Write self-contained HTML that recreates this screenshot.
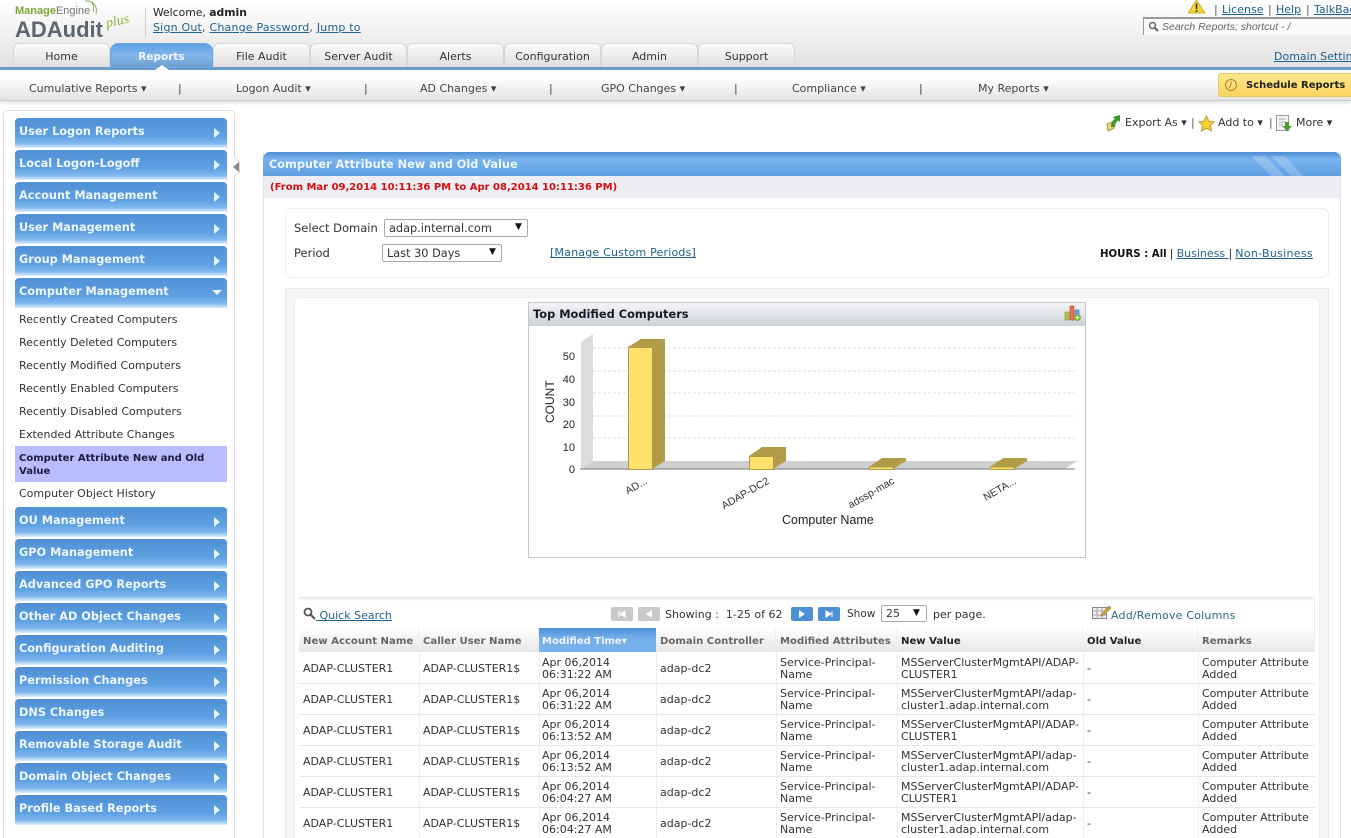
<!DOCTYPE html>
<html style="overflow:hidden"><head><meta charset="utf-8"><style>
html,body{margin:0;padding:0;background:#fff}
body{width:1351px;height:838px;font-family:"DejaVu Sans","Liberation Sans",sans-serif;font-size:11px;color:#333}
#w{position:relative;width:1351px;height:838px;overflow:hidden}
.a,.t,.s,.h,.i,.c,.th{position:absolute;white-space:nowrap}
a{color:#1f6290;text-decoration:underline}
.t{top:43px;height:24px;width:97px;box-sizing:border-box;border:1px solid #d8d8d8;border-bottom:0;border-radius:6px 6px 0 0;background:linear-gradient(#fafafa,#dfdfdf);text-align:center;line-height:26px;color:#333;font-size:11px}
.s{top:82px;line-height:13px;color:#444;font-size:11px}
.h{left:15px;width:212px;height:30px;border-radius:4px 4px 0 0;background:linear-gradient(#4f90d6 0,#5fa0e2 60%,#80b8ee 85%,#dfeefa 100%);color:#eef6fd;font-weight:bold;font-size:11.3px;line-height:28px;text-indent:4px}
.h:after{content:"";position:absolute;left:199px;top:10px;border-left:6px solid #e6f1fb;border-top:5px solid transparent;border-bottom:5px solid transparent}
.h.o:after{left:197px;top:12px;border-top:5px solid #e6f1fb;border-left:5px solid transparent;border-right:5px solid transparent;border-bottom:0}
.i{left:19px;line-height:13px;color:#333;font-size:11px}
.th{top:628px;height:24px;line-height:28px;font-weight:bold;color:#666;background:linear-gradient(#fff,#e6e6e6);border-right:1px solid #eee;box-sizing:border-box;padding-left:4px;font-size:10.1px}
.c{line-height:12px;color:#333;font-size:11px}
.r{position:absolute;left:299px;width:1016px;height:1px;background:#e8e8e8}
.v{position:absolute;top:652px;height:186px;width:1px;background:#eee}
.b{position:absolute;top:607px;width:22px;height:14px;border-radius:2px}
</style></head><body><div id="w">

<!-- header -->
<div class="a" style="left:0;top:0;width:1351px;height:67px;background:linear-gradient(#fff,#e2e2e2)"></div>
<div class="a" style="left:15px;top:3px;font:bold 11px 'Liberation Sans',sans-serif;color:#7ba63c;line-height:16px">Manage<span style="font-weight:normal;color:#777">Engine</span></div>
<svg class="a" style="left:82px;top:0" width="20" height="16"><path d="M3 1C9 0 16 4 14 14M6 1C10 1 13 5 11 12" fill="none" stroke="#8fae5d" stroke-width="1"/></svg>
<div class="a" style="left:15px;top:17px;font:bold 22px 'Liberation Sans',sans-serif;color:#5d6670;line-height:25px">ADAudit</div>
<div class="a" style="left:106px;top:14px;font:italic 14px 'Liberation Serif',serif;color:#8cb63f;line-height:16px;transform:rotate(-12deg)">plus</div>
<div class="a" style="left:145px;top:8px;width:1px;height:28px;background:#ccc"></div>
<div class="a" style="left:153px;top:6px;line-height:13px;color:#222;font-size:10.8px">Welcome, <b>admin</b></div>
<div class="a" style="left:153px;top:21px;line-height:13px;font-size:11px;letter-spacing:.2px;color:#555"><a>Sign Out</a>, <a>Change Password</a>, <a>Jump to</a></div>

<svg class="a" style="left:1188px;top:0" width="18" height="14"><path d="M8.5 0L17 13H0Z" fill="#f2d32f" stroke="#b8a020" stroke-width=".7"/><path d="M8.5 3.5V9M8.5 10V12" stroke="#333" stroke-width="1.6"/></svg>
<div class="a" style="left:1214px;top:3px;line-height:13px;font-size:11px;color:#555">|</div>
<div class="a" style="left:1222px;top:3px;line-height:13px;font-size:11px"><a>License</a></div>
<div class="a" style="left:1268px;top:3px;line-height:13px;font-size:11px;color:#555">|</div>
<div class="a" style="left:1276px;top:3px;line-height:13px;font-size:11px"><a>Help</a></div>
<div class="a" style="left:1306px;top:3px;line-height:13px;font-size:11px;color:#555">|</div>
<div class="a" style="left:1314px;top:3px;line-height:13px;font-size:11px"><a>TalkBack</a></div>
<div class="a" style="left:1143px;top:17px;width:208px;height:18px;box-sizing:border-box;border-left:1px solid #999;border-top:2px solid #999;background:#fafafa"></div>
<svg class="a" style="left:1148px;top:21px" width="11" height="11"><circle cx="4.5" cy="4.5" r="3" fill="none" stroke="#666" stroke-width="1.5"/><path d="M6.8 6.8L10 10" stroke="#666" stroke-width="2"/></svg>
<div class="a" style="left:1162px;top:21px;font:italic 10.5px 'Liberation Sans',sans-serif;color:#666;line-height:13px">Search Reports; shortcut - /</div>
<div class="a" style="left:1274px;top:50px;line-height:13px;font-size:11px"><a>Domain Settings</a></div>

<!-- tabs -->
<div class="t" style="left:13px">Home</div>
<div class="a" style="left:110px;top:43px;width:103px;height:25px;border-radius:8px 8px 0 0;background:linear-gradient(#5fa0e2,#82b6ea 50%,#6f9fcf);text-align:center;line-height:27px;color:#eef6ff;font-weight:bold;font-size:10.5px;border:1px solid #6fa8e0;box-sizing:border-box;z-index:2">Reports</div>
<div class="t" style="left:213px">File Audit</div>
<div class="t" style="left:310px">Server Audit</div>
<div class="t" style="left:407px">Alerts</div>
<div class="t" style="left:504px">Configuration</div>
<div class="t" style="left:601px">Admin</div>
<div class="t" style="left:698px">Support</div>
<div class="a" style="left:0;top:67px;width:1351px;height:3px;background:#6a9ac8;z-index:1"></div>
<div class="a" style="left:155px;top:65px;border-bottom:5px solid #fff;border-left:7px solid transparent;border-right:7px solid transparent;z-index:3"></div>

<!-- subnav -->
<div class="a" style="left:0;top:70px;width:1351px;height:30px;background:linear-gradient(#fff 25%,#e4e4e4);border-bottom:1px solid #ccc;box-shadow:0 2px 3px #e4e4e4"></div>
<div class="s" style="left:29px">Cumulative Reports ▾</div><div class="s" style="left:178px">|</div>
<div class="s" style="left:236px">Logon Audit ▾</div><div class="s" style="left:364px">|</div>
<div class="s" style="left:420px">AD Changes ▾</div><div class="s" style="left:549px">|</div>
<div class="s" style="left:601px">GPO Changes ▾</div><div class="s" style="left:734px">|</div>
<div class="s" style="left:792px">Compliance ▾</div><div class="s" style="left:919px">|</div>
<div class="s" style="left:978px">My Reports ▾</div>
<div class="a" style="left:1218px;top:73px;width:133px;height:24px;box-sizing:border-box;border:1px solid #e8c860;border-right:0;border-radius:3px 0 0 3px;background:linear-gradient(#fde88e,#fbd45e)"></div>
<svg class="a" style="left:1224px;top:78px" width="14" height="14"><circle cx="7" cy="7" r="5.5" fill="none" stroke="#a58a2c"/><path d="M7 3.5V7L5 10" fill="none" stroke="#a58a2c"/></svg>
<div class="a" style="left:1246px;top:79px;line-height:13px;font-weight:bold;color:#222;font-size:10px">Schedule Reports</div>

<!-- sidebar -->
<div class="a" style="left:3px;top:110px;width:232px;height:740px;box-sizing:border-box;border:1px solid #ddd;border-radius:5px;background:#fff"></div>
<div class="a" style="left:230px;top:152px;width:9px;height:30px;background:#fff;z-index:2"></div>
<svg class="a" style="left:229px;top:150px;z-index:3" width="12" height="34"><path d="M5.5 0V8L10.5 12V22L5.5 26V34" fill="none" stroke="#ddd"/><path d="M10 12V22L4 17Z" fill="#888"/></svg>
<div class="h" style="top:118px">User Logon Reports</div>
<div class="h" style="top:150px">Local Logon-Logoff</div>
<div class="h" style="top:182px">Account Management</div>
<div class="h" style="top:214px">User Management</div>
<div class="h" style="top:246px">Group Management</div>
<div class="h o" style="top:278px">Computer Management</div>
<div class="i" style="top:313px">Recently Created Computers</div>
<div class="i" style="top:336px">Recently Deleted Computers</div>
<div class="i" style="top:359px">Recently Modified Computers</div>
<div class="i" style="top:382px">Recently Enabled Computers</div>
<div class="i" style="top:405px">Recently Disabled Computers</div>
<div class="i" style="top:428px">Extended Attribute Changes</div>
<div class="a" style="left:15px;top:446px;width:212px;height:36px;background:#b9bdfb"></div>
<div class="i" style="top:452px;font-weight:bold;color:#1c1c44;font-size:10px">Computer Attribute New and Old<br>Value</div>
<div class="i" style="top:487px">Computer Object History</div>
<div class="h" style="top:507px">OU Management</div>
<div class="h" style="top:539px">GPO Management</div>
<div class="h" style="top:571px">Advanced GPO Reports</div>
<div class="h" style="top:603px">Other AD Object Changes</div>
<div class="h" style="top:635px">Configuration Auditing</div>
<div class="h" style="top:667px">Permission Changes</div>
<div class="h" style="top:699px">DNS Changes</div>
<div class="h" style="top:731px">Removable Storage Audit</div>
<div class="h" style="top:763px">Domain Object Changes</div>
<div class="h" style="top:795px">Profile Based Reports</div>

<!-- actions -->
<svg class="a" style="left:1106px;top:114px" width="16" height="18"><path d="M1 10L8 7L8 14L2 17Z" fill="#eed77a" stroke="#b09a40"/><path d="M5 13C5 8 7 6 9 5L7 3L14 1L14 8L12 6.5C10 8 9 10 9 13Z" fill="#3d9a2c"/></svg>
<div class="a" style="left:1125px;top:116px;line-height:13px;color:#333;font-size:11px">Export As ▾</div>
<div class="a" style="left:1191px;top:116px;line-height:13px;color:#555">|</div>
<svg class="a" style="left:1198px;top:115px" width="17" height="17"><path d="M8.5 1L11 6.3L16 7L12.3 10.5L13.5 16L8.5 13.2L3.5 16L4.7 10.5L1 7L6 6.3Z" fill="#f6d234" stroke="#c79a2a"/></svg>
<div class="a" style="left:1218px;top:116px;line-height:13px;color:#333;font-size:11px">Add to ▾</div>
<div class="a" style="left:1269px;top:116px;line-height:13px;color:#555">|</div>
<svg class="a" style="left:1276px;top:115px" width="17" height="17"><rect x=".5" y=".5" width="12" height="15" fill="#f4f4f4" stroke="#999"/><path d="M3 4H10M3 7H9M3 10H7" stroke="#aaa"/><path d="M9 7H13V11H16L11 16L6 11H9Z" fill="#4e9a2e"/></svg>
<div class="a" style="left:1296px;top:116px;line-height:13px;color:#333;font-size:11px">More ▾</div>

<!-- main panel -->
<div class="a" style="left:263px;top:152px;width:1078px;height:686px;box-sizing:border-box;border-left:1px solid #e4e4e4;border-right:1px solid #e4e4e4;background:#fff"></div>
<div class="a" style="left:263px;top:152px;width:1078px;height:24px;border-radius:7px 7px 0 0;background:linear-gradient(#4d8dd2,#79b3ee 30%,#5d9de0);overflow:hidden">
<svg class="a" style="left:980px;top:0" width="70" height="24"><path d="M8 4H22L42 24H28ZM28 4H42L60 24H48Z" fill="#fff" opacity=".22"/></svg></div>
<div class="a" style="left:269px;top:158px;line-height:14px;color:#eef6fd;font-weight:bold;font-size:11.3px">Computer Attribute New and Old Value</div>
<div class="a" style="left:264px;top:176px;width:1076px;height:22px;background:#eceef4"></div>
<div class="a" style="left:270px;top:181px;line-height:13px;color:#d40f0f;font-weight:bold;font-size:10px">(From Mar 09,2014 10:11:36 PM to Apr 08,2014 10:11:36 PM)</div>

<!-- filter -->
<div class="a" style="left:285px;top:208px;width:1044px;height:70px;box-sizing:border-box;border:1px solid #eee;border-radius:6px"></div>
<div class="a" style="left:294px;top:221px;line-height:14px;font-size:11.5px;color:#333">Select Domain</div>
<div class="a" style="left:384px;top:219px;width:144px;height:18px;box-sizing:border-box;border:1px solid #aaa;border-radius:2px;line-height:17px;padding-left:4px;font-size:11.3px;color:#333">adap.internal.com<span style="position:absolute;left:130px;top:-1px;font-size:9px;color:#111">▼</span></div>
<div class="a" style="left:294px;top:246px;line-height:14px;font-size:11.5px;color:#333">Period</div>
<div class="a" style="left:382px;top:244px;width:120px;height:18px;box-sizing:border-box;border:1px solid #aaa;border-radius:2px;line-height:17px;padding-left:4px;font-size:11.3px;color:#333">Last 30 Days<span style="position:absolute;left:106px;top:-1px;font-size:9px;color:#111">▼</span></div>
<div class="a" style="left:550px;top:246px;line-height:13px;font-size:11px;letter-spacing:.2px"><a>[Manage Custom Periods]</a></div>
<div class="a" style="left:1100px;top:247px;line-height:13px;font-size:10.2px;color:#111"><b>HOURS : All</b> | <a style="font-size:11px">Business </a> | <a style="font-size:11px;letter-spacing:.3px">Non-Business </a></div>

<!-- chart container -->
<div class="a" style="left:285px;top:288px;width:1044px;height:560px;box-sizing:border-box;border:1px solid #e8e8e8;background:#f6f6f6"></div>
<div class="a" style="left:294px;top:297px;width:1026px;height:550px;box-sizing:border-box;border:1px solid #eee;border-radius:6px;background:#fff"></div>

<!-- chart -->
<div class="a" style="left:528px;top:302px;width:558px;height:256px;box-sizing:border-box;border:1px solid #c4c8cc;background:#fff"></div>
<div class="a" style="left:529px;top:303px;width:556px;height:23px;background:linear-gradient(#f4f5f7,#ccd1d6)"></div>
<div class="a" style="left:533px;top:307px;line-height:14px;font-weight:bold;color:#1a1a2a;font-size:11.4px">Top Modified Computers</div>
<svg class="a" style="left:1064px;top:305px" width="18" height="17"><rect x="1" y="7" width="4" height="8" fill="#b8c24a" stroke="#7b8a30" stroke-width=".6"/><rect x="6" y="1" width="4" height="14" fill="#e8735a" stroke="#a84a30" stroke-width=".6"/><rect x="11" y="5" width="4" height="10" fill="#6ba8d8" stroke="#3b78a8" stroke-width=".6"/><circle cx="13.5" cy="12.5" r="3.5" fill="#7ab92e"/><path d="M11.5 12.5H15.5M13.5 10.5V14.5" stroke="#fff"/></svg>
<svg class="a" style="left:529px;top:326px" width="556" height="231" viewBox="529 326 556 231">
<path d="M581 469V342L593 334V461Z" fill="#dcdcdc"/>
<path d="M581 469L593 461H1077L1065 469Z" fill="#cfcfcf"/>
<g stroke="#ddd" stroke-dasharray="3 2"><path d="M593 348H1075M593 371H1075M593 393H1075M593 416H1075M593 438H1075"/></g>
<path d="M580 469H1075" stroke="#777"/>
<path d="M652 347L665 339V461L652 469Z" fill="#b09c46"/><path d="M628 347L641 339H665L652 347Z" fill="#b09c46"/><rect x="628.5" y="347.5" width="24" height="122" fill="#ffe06a" stroke="#b09c46"/>
<path d="M773 456L786 447V461L773 469Z" fill="#b09c46"/><path d="M749 456L762 447H786L773 456Z" fill="#b09c46"/><rect x="749.5" y="456.5" width="24" height="13" fill="#ffe06a" stroke="#b09c46"/>
<path d="M893 467L906 458V461L893 469Z" fill="#b09c46"/><path d="M869 467L882 458H906L893 467Z" fill="#b09c46"/><rect x="869.5" y="467" width="24" height="2.5" fill="#ffe06a" stroke="#b09c46"/>
<path d="M1014 467L1027 458V461L1014 469Z" fill="#b09c46"/><path d="M990 467L1003 458H1027L1014 467Z" fill="#b09c46"/><rect x="990.5" y="467" width="24" height="2.5" fill="#ffe06a" stroke="#b09c46"/>
<g font-family="Liberation Sans" font-size="11" fill="#222" text-anchor="end">
<text x="575" y="473">0</text><text x="575" y="451">10</text><text x="575" y="428">20</text><text x="575" y="406">30</text><text x="575" y="383">40</text><text x="575" y="360">50</text>
</g>
<text transform="translate(554,423) rotate(-90)" font-family="Liberation Sans" font-size="12" fill="#222">COUNT</text>
<g font-family="Liberation Sans" font-size="10.5" fill="#333" text-anchor="end">
<text transform="translate(648,483) rotate(-30)">AD...</text>
<text transform="translate(770,483) rotate(-30)">ADAP-DC2</text>
<text transform="translate(895,483) rotate(-30)">adssp-mac</text>
<text transform="translate(1017,483) rotate(-30)">NETA...</text>
</g>
<text x="782" y="524" font-family="Liberation Sans" font-size="12.5" fill="#222">Computer Name</text>
</svg>

<!-- table toolbar -->
<div class="a" style="left:299px;top:597px;width:1016px;height:31px;background:linear-gradient(#e4e4e4,#fff 12%);border-right:1px solid #eee;box-sizing:border-box"></div>
<svg class="a" style="left:303px;top:607px" width="13" height="13"><circle cx="5" cy="5" r="3.5" fill="none" stroke="#555" stroke-width="1.8"/><path d="M7.5 7.5L12 12" stroke="#555" stroke-width="2.2"/></svg>
<div class="a" style="left:316px;top:609px;line-height:13px;font-size:11px"><a>&nbsp;Quick Search</a></div>
<div class="b" style="left:611px;background:#c9c9c9"></div><svg class="a" style="left:611px;top:607px" width="22" height="14"><path d="M8 4V10M14 4V10L9 7Z" fill="#fff" stroke="#fff"/></svg>
<div class="b" style="left:638px;background:#c9c9c9"></div><svg class="a" style="left:638px;top:607px" width="22" height="14"><path d="M14 3V11L8 7Z" fill="#fff"/></svg>
<div class="a" style="left:665px;top:608px;line-height:13px;font-size:11px;color:#333">Showing : &nbsp;1-25 of 62</div>
<div class="b" style="left:791px;background:#4d90d6"></div><svg class="a" style="left:791px;top:607px" width="22" height="14"><path d="M8 3V11L14 7Z" fill="#fff"/></svg>
<div class="b" style="left:818px;background:#4d90d6"></div><svg class="a" style="left:818px;top:607px" width="22" height="14"><path d="M14 4V10M8 4V10L13 7Z" fill="#fff" stroke="#fff"/></svg>
<div class="a" style="left:847px;top:608px;line-height:13px;font-size:10.5px;color:#333">Show</div>
<div class="a" style="left:881px;top:605px;width:46px;height:17px;box-sizing:border-box;border:1px solid #aaa;border-radius:2px;line-height:16px;padding-left:4px;font-size:11px;color:#333">25<span style="position:absolute;left:31px;top:-1px;font-size:9px;color:#111">▼</span></div>
<div class="a" style="left:933px;top:608px;line-height:13px;font-size:11px;color:#333">per page.</div>
<svg class="a" style="left:1092px;top:605px" width="20" height="15"><rect x=".5" y="2.5" width="14" height="11" fill="#eee" stroke="#888"/><path d="M5 3V13M10 3V13M1 6H14M1 10H14" stroke="#aaa"/><path d="M10 9L17 1L19 3L12 10L9 11Z" fill="#d8b23a" stroke="#8a6f20" stroke-width=".6"/></svg>
<div class="a" style="left:1111px;top:609px;line-height:13px;font-size:11px;letter-spacing:.2px;color:#2a6a8a">Add/Remove Columns</div>

<!-- table head -->
<div class="th" style="left:299px;width:120px">New Account Name</div>
<div class="th" style="left:419px;width:120px">Caller User Name</div>
<div class="a" style="left:539px;top:628px;width:117px;height:24px;background:linear-gradient(#4b8ed6 0,#72aee9 40%,#79b3ec);line-height:28px;font-weight:bold;color:#eef5fd;padding-left:3px;box-sizing:border-box;font-size:10px">Modified Time▾</div>
<div class="th" style="left:656px;width:120px">Domain Controller</div>
<div class="th" style="left:776px;width:121px">Modified Attributes</div>
<div class="th" style="left:897px;width:186px;color:#222">New Value</div>
<div class="th" style="left:1083px;width:115px;color:#222">Old Value</div>
<div class="th" style="left:1198px;width:117px">Remarks</div>

<div class="v" style="left:419px"></div><div class="v" style="left:539px"></div><div class="v" style="left:656px"></div><div class="v" style="left:776px"></div><div class="v" style="left:897px"></div><div class="v" style="left:1083px"></div><div class="v" style="left:1198px"></div>
<div class="r" style="top:683px"></div><div class="r" style="top:714px"></div><div class="r" style="top:745px"></div><div class="r" style="top:776px"></div><div class="r" style="top:807px"></div>

<!-- row 1 -->
<div class="c" style="left:303px;top:663px">ADAP-CLUSTER1</div><div class="c" style="left:423px;top:663px">ADAP-CLUSTER1$</div><div class="c" style="left:542px;top:657px">Apr 06,2014<br>06:31:22 AM</div><div class="c" style="left:660px;top:663px">adap-dc2</div><div class="c" style="left:780px;top:657px">Service-Principal-<br>Name</div><div class="c" style="left:901px;top:657px">MSServerClusterMgmtAPI/ADAP-<br>CLUSTER1</div><div class="c" style="left:1087px;top:663px">-</div><div class="c" style="left:1202px;top:657px">Computer Attribute<br>Added</div>
<!-- row 2 -->
<div class="c" style="left:303px;top:694px">ADAP-CLUSTER1</div><div class="c" style="left:423px;top:694px">ADAP-CLUSTER1$</div><div class="c" style="left:542px;top:688px">Apr 06,2014<br>06:31:22 AM</div><div class="c" style="left:660px;top:694px">adap-dc2</div><div class="c" style="left:780px;top:688px">Service-Principal-<br>Name</div><div class="c" style="left:901px;top:688px">MSServerClusterMgmtAPI/adap-<br>cluster1.adap.internal.com</div><div class="c" style="left:1087px;top:694px">-</div><div class="c" style="left:1202px;top:688px">Computer Attribute<br>Added</div>
<!-- row 3 -->
<div class="c" style="left:303px;top:725px">ADAP-CLUSTER1</div><div class="c" style="left:423px;top:725px">ADAP-CLUSTER1$</div><div class="c" style="left:542px;top:719px">Apr 06,2014<br>06:13:52 AM</div><div class="c" style="left:660px;top:725px">adap-dc2</div><div class="c" style="left:780px;top:719px">Service-Principal-<br>Name</div><div class="c" style="left:901px;top:719px">MSServerClusterMgmtAPI/ADAP-<br>CLUSTER1</div><div class="c" style="left:1087px;top:725px">-</div><div class="c" style="left:1202px;top:719px">Computer Attribute<br>Added</div>
<!-- row 4 -->
<div class="c" style="left:303px;top:756px">ADAP-CLUSTER1</div><div class="c" style="left:423px;top:756px">ADAP-CLUSTER1$</div><div class="c" style="left:542px;top:750px">Apr 06,2014<br>06:13:52 AM</div><div class="c" style="left:660px;top:756px">adap-dc2</div><div class="c" style="left:780px;top:750px">Service-Principal-<br>Name</div><div class="c" style="left:901px;top:750px">MSServerClusterMgmtAPI/adap-<br>cluster1.adap.internal.com</div><div class="c" style="left:1087px;top:756px">-</div><div class="c" style="left:1202px;top:750px">Computer Attribute<br>Added</div>
<!-- row 5 -->
<div class="c" style="left:303px;top:787px">ADAP-CLUSTER1</div><div class="c" style="left:423px;top:787px">ADAP-CLUSTER1$</div><div class="c" style="left:542px;top:781px">Apr 06,2014<br>06:04:27 AM</div><div class="c" style="left:660px;top:787px">adap-dc2</div><div class="c" style="left:780px;top:781px">Service-Principal-<br>Name</div><div class="c" style="left:901px;top:781px">MSServerClusterMgmtAPI/ADAP-<br>CLUSTER1</div><div class="c" style="left:1087px;top:787px">-</div><div class="c" style="left:1202px;top:781px">Computer Attribute<br>Added</div>
<!-- row 6 -->
<div class="c" style="left:303px;top:818px">ADAP-CLUSTER1</div><div class="c" style="left:423px;top:818px">ADAP-CLUSTER1$</div><div class="c" style="left:542px;top:812px">Apr 06,2014<br>06:04:27 AM</div><div class="c" style="left:660px;top:818px">adap-dc2</div><div class="c" style="left:780px;top:812px">Service-Principal-<br>Name</div><div class="c" style="left:901px;top:812px">MSServerClusterMgmtAPI/adap-<br>cluster1.adap.internal.com</div><div class="c" style="left:1087px;top:818px">-</div><div class="c" style="left:1202px;top:812px">Computer Attribute<br>Added</div>
</div></body></html>
